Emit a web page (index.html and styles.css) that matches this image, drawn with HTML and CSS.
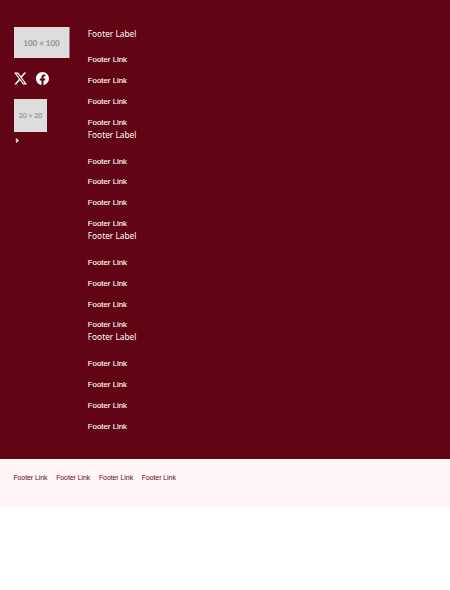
FILE: index.html
```html
<!DOCTYPE html>
<html lang="en">
<head>
<meta charset="utf-8">
<title>Footer</title>
<link rel="stylesheet" href="styles.css">
</head>
<body>
<footer>
  <div class="main">
    <div class="brand">
      <svg class="logo" viewBox="0 0 55.5 31.5"><rect width="55.5" height="31.5" fill="#ddd"/><text x="27.5" y="18.8" text-anchor="middle">100 × 100</text></svg>
      <div class="social">
        <svg viewBox="0 0 16 16"><path d="M12.6.75h2.454l-5.36 6.142L16 15.25h-4.937l-3.867-5.07-4.425 5.07H.316l5.733-6.57L0 .75h5.063l3.495 4.633L12.601.75Zm-.86 13.028h1.36L4.323 2.145H2.865z"/></svg>
        <svg viewBox="0 0 16 16"><path d="M16 8.049c0-4.446-3.582-8.05-8-8.05C3.58 0-.002 3.603-.002 8.05c0 4.017 2.926 7.347 6.75 7.951v-5.625h-2.03V8.05H6.75V6.275c0-2.017 1.195-3.131 3.022-3.131.876 0 1.791.157 1.791.157v1.98h-1.009c-.993 0-1.303.621-1.303 1.258v1.51h2.218l-.354 2.326H9.25V16c3.824-.604 6.75-3.934 6.75-7.951"/></svg>
      </div>
      <svg class="badge" viewBox="0 0 33 33.4"><rect width="33" height="33.4" fill="#ddd"/><text x="16.5" y="19.2" text-anchor="middle">20 × 20</text></svg>
      <svg class="chevron" viewBox="0 0 4 5"><path d="M1 .7 2.8 2.5 1 4.3"/></svg>
    </div>
    <nav class="groups">
      <section><h2>Footer Label</h2><a>Footer Link</a><a>Footer Link</a><a>Footer Link</a><a>Footer Link</a></section>
      <section><h2>Footer Label</h2><a>Footer Link</a><a>Footer Link</a><a>Footer Link</a><a>Footer Link</a></section>
      <section><h2>Footer Label</h2><a>Footer Link</a><a>Footer Link</a><a>Footer Link</a><a>Footer Link</a></section>
      <section><h2>Footer Label</h2><a>Footer Link</a><a>Footer Link</a><a>Footer Link</a><a>Footer Link</a></section>
    </nav>
  </div>
  <nav class="legal"><a>Footer Link</a><a>Footer Link</a><a>Footer Link</a><a>Footer Link</a></nav>
</footer>
</body>
</html>
```

FILE: styles.css
```css
body { margin: 0; background: #fff; font-family: "Liberation Sans", sans-serif; }
.main { box-sizing: border-box; height: 459px; padding: 26.7px 14px 0; display: flex; gap: 18.3px; background: #610413; color: #fff; }
.brand { width: 55.5px; padding-top: .3px; display: flex; flex-direction: column; align-items: flex-start; }
svg { display: block; }
.logo { width: 55.5px; height: 31.5px; }
.logo text { font: 700 8px Lato, sans-serif; fill: #999; stroke: #999; stroke-width: .15px; text-rendering: geometricPrecision; }
.social { display: flex; gap: 9px; margin: 13.5px 0 14px; }
.social svg { width: 13px; height: 13px; fill: #fff; }
.badge { width: 33px; height: 33.4px; }
.badge text { font: 700 6.9px Lato, sans-serif; fill: #999; text-rendering: geometricPrecision; }
.chevron { width: 4px; height: 5px; margin: 5.4px 0 0 .7px; fill: none; stroke: #fff; stroke-width: 1.4; }
.groups section { height: 101.26px; }
.groups h2 { margin: 0 0 12.75px; font: 400 8.3px/14px "Noto Sans", sans-serif; }
.groups a { display: block; height: 20.8px; font-size: 7.85px; line-height: 13px; -webkit-text-stroke: .1px #fff; }
.legal { box-sizing: border-box; height: 48px; padding: 14px 13.4px 0; display: flex; gap: 8.7px; background: #fff5f6; color: #610413; font-size: 6.82px; line-height: 10px; }
```
